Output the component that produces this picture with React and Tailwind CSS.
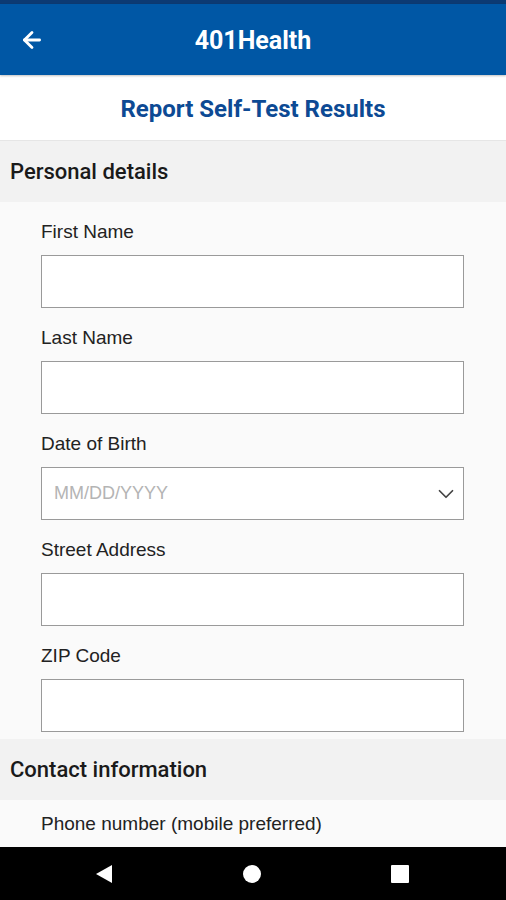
import { ArrowLeft, ChevronDown } from "lucide-react";

const Field = ({ label, placeholder, select }) => (
  <div className="flex flex-col">
    <label className="text-[19px] leading-[20px] text-[#222]">{label}</label>
    <div className="mt-[13px] flex h-[53px] w-[423px] items-center justify-between border border-[#9a9a9a] bg-white pl-[12px] pr-[4px]">
      <span className="text-[18px] text-[#b4b4b4]">{placeholder}</span>
      {select && <ChevronDown className="h-[26px] w-[26px] text-[#444]" strokeWidth={1.6} />}
    </div>
  </div>
);

const SectionHeader = ({ children, h }) => (
  <div className={`flex items-center bg-[#f2f2f2] px-[10px] ${h}`}>
    <h2 className="font-['Roboto',sans-serif] text-[22px] font-medium text-[#1a1a1a]">{children}</h2>
  </div>
);

export default function App() {
  return (
    <div className="flex h-[900px] w-[506px] flex-col overflow-hidden bg-[#fafafa] font-['Liberation_Sans',Arial,sans-serif]">
      <div className="h-[4px] bg-[#0c3a73]" />
      <header className="relative flex h-[71px] items-center justify-center bg-[#0057a5] shadow-[0_1px_2px_rgba(0,0,0,0.25)]">
        <button className="absolute left-[19px] top-[23px] text-white">
          <ArrowLeft className="h-[26px] w-[26px]" strokeWidth={2.6} />
        </button>
        <h1 className="pt-[2px] font-['Roboto',sans-serif] text-[25px] font-bold text-white">401Health</h1>
      </header>
      <div className="flex h-[66px] items-center justify-center border-b border-[#e6e6e6] bg-white">
        <p className="pt-[2px] font-['Roboto',sans-serif] text-[24px] font-bold text-[#0d4a94]">
          Report Self-Test Results
        </p>
      </div>
      <div className="flex-1 overflow-hidden">
        <SectionHeader h="h-[61px]">Personal details</SectionHeader>
        <div className="flex flex-col gap-[20px] pb-[7px] pl-[41px] pt-[20px]">
          <Field label="First Name" />
          <Field label="Last Name" />
          <Field label="Date of Birth" placeholder="MM/DD/YYYY" select />
          <Field label="Street Address" />
          <Field label="ZIP Code" />
        </div>
        <SectionHeader h="h-[61px]">Contact information</SectionHeader>
        <div className="pl-[41px] pt-[14px]">
          <Field label="Phone number (mobile preferred)" />
        </div>
      </div>
      <nav className="flex h-[53px] shrink-0 items-center gap-[130px] bg-black pl-[95px]">
        <svg width="18" height="20" viewBox="0 0 18 20">
          <path d="M17 1 L1 10 L17 19 Z" fill="white" />
        </svg>
        <div className="h-[18px] w-[18px] rounded-full bg-white" />
        <div className="h-[18px] w-[18px] rounded-[1px] bg-white" />
      </nav>
    </div>
  );
}
